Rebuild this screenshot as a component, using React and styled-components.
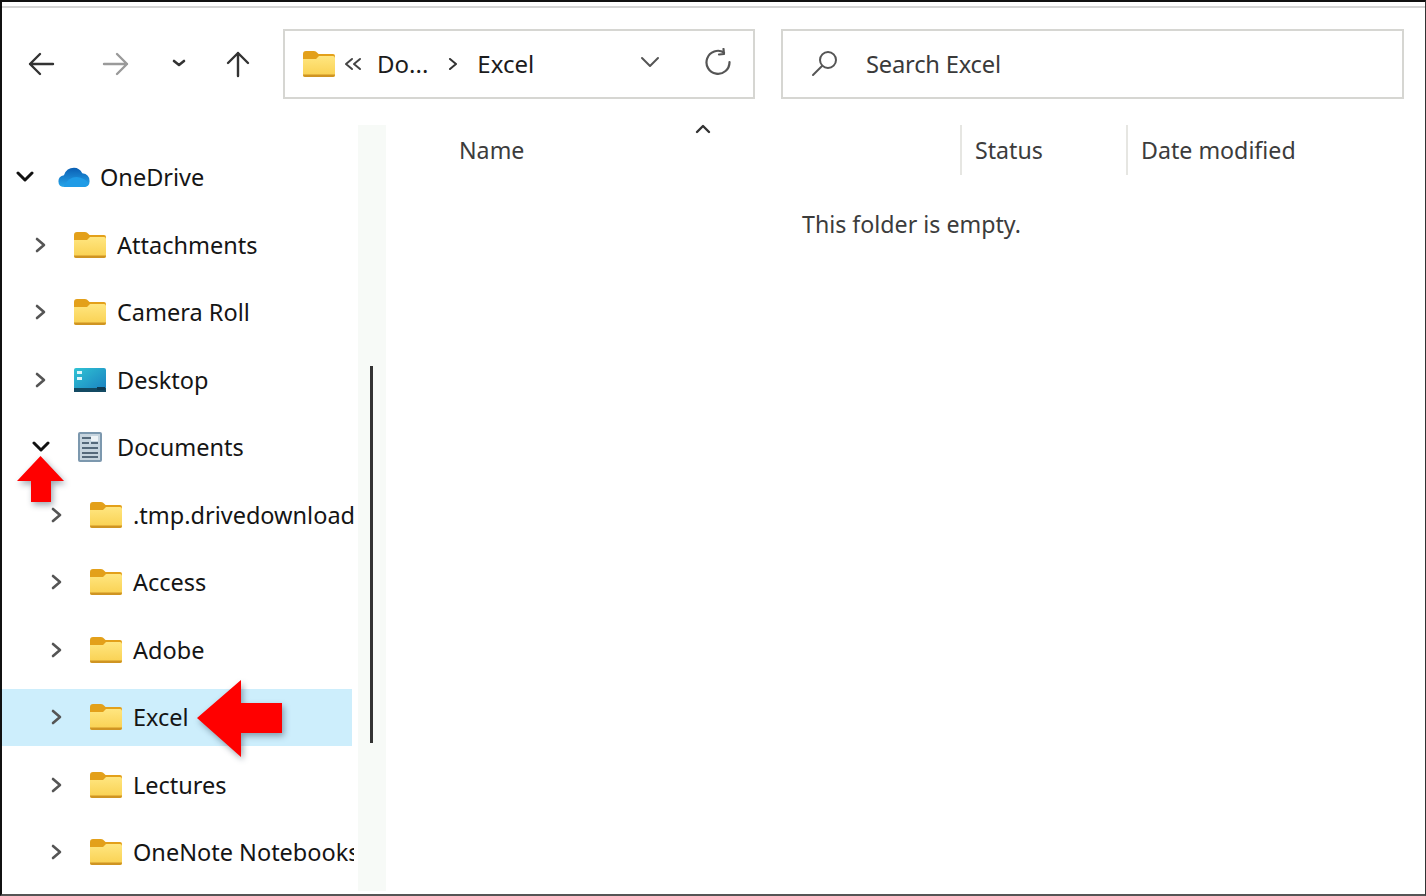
import React from "react";
import styled, { createGlobalStyle } from "styled-components";

const GlobalStyle = createGlobalStyle`
  html, body {
    margin: 0;
    padding: 0;
    background: #fff;
  }
  body {
    font-family: "Noto Sans", "Open Sans", sans-serif;
    color: #1a1a1a;
  }
`;

const Frame = styled.div`
  position: relative;
  box-sizing: border-box;
  width: 1426px;
  height: 896px;
  overflow: hidden;
  background: #fff;
  border-top: 2px solid #111;
  border-left: 2px solid #111;
  border-right: 1px solid #333;
  border-bottom: 2px solid #555;
  display: flex;
  flex-direction: column;
`;

const TopRule = styled.div`
  height: 2px;
  margin-top: 4px;
  background: #d4d4d4;
  flex: none;
`;

// toolbar
const Toolbar = styled.div`
  display: flex;
  align-items: center;
  height: 70px;
  margin-top: 21px;
  flex: none;
`;

const NavButton = styled.div`
  width: ${p => p.$w}px;
  margin-left: ${p => p.$ml}px;
  display: flex;
  justify-content: center;
  align-items: center;
  flex: none;
  color: ${p => p.$color || "#333"};
`;

const FieldBox = styled.div`
  box-sizing: border-box;
  height: 70px;
  border: 2px solid #d6d6d2;
  display: flex;
  align-items: center;
  flex: none;
  width: ${p => p.$w}px;
  margin-left: ${p => p.$ml}px;
  padding-left: ${p => p.$pl}px;
`;

const Crumb = styled.span`
  font-size: 24px;
  margin-left: ${p => p.$ml}px;
  margin-bottom: 2px;
  color: #1c1c1c;
  white-space: nowrap;
`;

const CrumbIcon = styled.div`
  margin-left: ${p => p.$ml}px;
  margin-bottom: ${p => p.$mb || 0}px;
  display: flex;
  align-items: center;
  color: ${p => p.$color || "#444"};
`;

const SearchText = styled.span`
  font-size: 23.7px;
  margin-left: 27px;
  color: #3a3a3a;
  letter-spacing: -0.2px;
`;

// main area
const Body = styled.div`
  display: flex;
  flex: 1;
  min-height: 0;
  margin-top: 26px;
  margin-bottom: 3px;
`;

const Tree = styled.div`
  width: 352px;
  margin-right: 4px;
  flex: none;
  padding-top: 23.5px;
  overflow: hidden;
`;

const TreeRow = styled.div`
  box-sizing: border-box;
  height: 57.5px;
  margin-bottom: 10px;
  width: 350px;
  display: flex;
  align-items: center;
  padding-left: ${p => p.$indent}px;
  background: ${p => (p.$selected ? "#cdeefc" : "transparent")};
`;

const Twisty = styled.div`
  width: 30px;
  margin-right: 16px;
  display: flex;
  justify-content: center;
  flex: none;
  color: ${p => (p.$open ? "#111" : "#555")};
`;

const RowIcon = styled.div`
  width: 36px;
  display: flex;
  justify-content: center;
  flex: none;
`;

const RowLabel = styled.span`
  font-size: 23.5px;
  line-height: 30px;
  margin-left: ${p => p.$ml}px;
  color: #151515;
  white-space: nowrap;
`;

const Gutter = styled.div`
  position: relative;
  width: 28px;
  flex: none;
  background: #f7faf7;
`;

const Thumb = styled.div`
  position: absolute;
  left: 12px;
  top: 241px;
  width: 3px;
  height: 377px;
  background: #333;
`;

const Content = styled.div`
  flex: 1;
  min-width: 0;
`;

const HeaderRow = styled.div`
  display: flex;
  height: 50px;
  align-items: stretch;
`;

const HeaderCell = styled.div`
  position: relative;
  box-sizing: border-box;
  width: ${p => p.$w}px;
  flex: none;
  padding-left: ${p => p.$pl}px;
  padding-top: 9px;
  font-size: 23.2px;
  line-height: 32px;
  color: #3c3c3c;
  border-left: ${p => (p.$sep ? "2px solid #e6e6e2" : "none")};
  white-space: nowrap;
`;

const SortCaret = styled.div`
  position: absolute;
  left: 308px;
  top: -4px;
  color: #333;
  display: flex;
`;

const EmptyText = styled.div`
  margin-top: 33px;
  padding-left: 416px;
  font-size: 23.2px;
  line-height: 32px;
  color: #3c3c3c;
`;

const ArrowOverlay = styled.svg`
  position: absolute;
  left: ${p => p.$x}px;
  top: ${p => p.$y}px;
  filter: drop-shadow(2px 3px 3px rgba(40, 60, 80, 0.45));
`;

const Stroke = ({ size, w = 2, children, h }) => (
  <svg width={size} height={h || size} viewBox={`0 0 ${size} ${h || size}`} fill="none" stroke="currentColor" strokeWidth={w} strokeLinecap="round" strokeLinejoin="round">
    {children}
  </svg>
);

const Folder = () => (
  <svg width="34" height="30" viewBox="0 0 34 30">
    <defs>
      <linearGradient id="folderFace" x1="0" y1="0" x2="0" y2="1">
        <stop offset="0" stopColor="#ffe680" />
        <stop offset="1" stopColor="#f9d050" />
      </linearGradient>
    </defs>
    <path d="M1 5 Q1 2 4 2 H12 Q14 2 15.500 4 L16.500 5 H31 Q33 5 33 7 V12 H1 Z" fill="#e3a01a" />
    <path d="M1 10 H14 L17 7 H31 Q33 7 33 9 V26 Q33 28 31 28 H3 Q1 28 1 26 Z" fill="url(#folderFace)" />
    <path d="M1 26 Q1 28 3 28 H31 Q33 28 33 26 V25.500 H1 Z" fill="#cf9422" />
  </svg>
);

const Cloud = () => (
  <svg width="34" height="22" viewBox="0 0 36 24">
    <defs>
      <linearGradient id="cloud" x1="0" y1="0" x2="0" y2="1">
        <stop offset="0" stopColor="#0a5fb4" />
        <stop offset="1" stopColor="#27a6ea" />
      </linearGradient>
    </defs>
    <path d="M8 23 Q1 23 1 16.500 Q1 11 7 10 Q10 2 18 2 Q24 2 27 8 Q35 9 35 16.500 Q35 23 28 23 Z" fill="url(#cloud)" />
    <path d="M7 22 Q12 12 21 12 Q30 13 34 19 Q32 23 28 23 H8 Z" fill="#1f9be6" />
  </svg>
);

const DesktopIcon = () => (
  <svg width="34" height="26" viewBox="0 0 34 26">
    <defs>
      <linearGradient id="desk" x1="0" y1="0" x2="1" y2="1">
        <stop offset="0" stopColor="#2fc3d4" />
        <stop offset="1" stopColor="#1a7fc0" />
      </linearGradient>
    </defs>
    <rect x="1" y="1" width="32" height="23" rx="2" fill="url(#desk)" />
    <rect x="1" y="21" width="32" height="4" fill="#134a63" />
    <rect x="4" y="4" width="5" height="3" fill="#dff6fa" />
    <rect x="4" y="10" width="5" height="3" fill="#dff6fa" />
    <rect x="24" y="20" width="8" height="3" fill="#0e3a52" />
  </svg>
);

const DocsIcon = () => (
  <svg width="26" height="32" viewBox="0 0 26 32">
    <rect x="1" y="1" width="24" height="30" rx="2" fill="#7c98ae" />
    <rect x="3" y="3" width="20" height="26" fill="#c6d4de" />
    <path d="M5 7 H21 M5 12 H12 M14 12 H21 M5 17 H21 M5 22 H21 M5 26 H21" stroke="#55697a" strokeWidth="1.800" />
    <rect x="14" y="5" width="7" height="5" fill="#eef3f6" />
  </svg>
);

const ChevRight = () => (
  <Stroke size={16} w={2.6}>
    <path d="M4 2 L11 8 L4 14" />
  </Stroke>
);

const ChevDown = () => (
  <Stroke size={18} w={3}>
    <path d="M2 5 L9 12 L16 5" />
  </Stroke>
);

const rows = [
  { label: "OneDrive", indent: 8, open: true, icon: <Cloud />, ml: 8 },
  { label: "Attachments", indent: 24, icon: <Folder />, ml: 9 },
  { label: "Camera Roll", indent: 24, icon: <Folder />, ml: 9 },
  { label: "Desktop", indent: 24, icon: <DesktopIcon />, ml: 9 },
  { label: "Documents", indent: 24, open: true, icon: <DocsIcon />, ml: 9 },
  { label: ".tmp.drivedownload", indent: 40, icon: <Folder />, ml: 9 },
  { label: "Access", indent: 40, icon: <Folder />, ml: 9 },
  { label: "Adobe", indent: 40, icon: <Folder />, ml: 9 },
  { label: "Excel", indent: 40, icon: <Folder />, ml: 9, selected: true },
  { label: "Lectures", indent: 40, icon: <Folder />, ml: 9 },
  { label: "OneNote Notebooks", indent: 40, icon: <Folder />, ml: 9 },
];

const App = () => {
  return (
    <Frame>
      <GlobalStyle />
      <TopRule />
      <Toolbar>
        <NavButton $w={32} $ml={23}>
          <Stroke size={28} w={2.4}>
            <path d="M26 14 H3 M13 4 L3 14 L13 24" />
          </Stroke>
        </NavButton>
        <NavButton $w={32} $ml={43} $color="#9a9a9a">
          <Stroke size={28} w={2.4}>
            <path d="M2 14 H25 M15 4 L25 14 L15 24" />
          </Stroke>
        </NavButton>
        <NavButton $w={20} $ml={37} $color="#333">
          <Stroke size={14} w={2.6}>
            <path d="M2 4 L7 8 L12 4" />
          </Stroke>
        </NavButton>
        <NavButton $w={30} $ml={34}>
          <Stroke size={28} w={2.4}>
            <path d="M14 26 V3 M4 13 L14 3 L24 13" />
          </Stroke>
        </NavButton>
        <FieldBox $w={472} $ml={30} $pl={17}>
          <Folder />
          <CrumbIcon $ml={8} $color="#444">
            <Stroke size={18} w={2}>
              <path d="M8 4 L2 9 L8 14 M16 4 L10 9 L16 14" />
            </Stroke>
          </CrumbIcon>
          <Crumb $ml={15}>Do...</Crumb>
          <CrumbIcon $ml={19} $color="#333">
            <Stroke size={12} w={2}>
              <path d="M3 1 L9 6 L3 11" />
            </Stroke>
          </CrumbIcon>
          <Crumb $ml={18}>Excel</Crumb>
          <CrumbIcon $ml={106} $mb={4} $color="#555">
            <Stroke size={20} w={2}>
              <path d="M2 6 L10 14 L18 6" />
            </Stroke>
          </CrumbIcon>
          <CrumbIcon $ml={44} $mb={4} $color="#555">
            <Stroke size={28} w={2.2}>
              <path d="M20 4.500 A11.500 11.500 0 1 0 25.500 14 M19.500 1 L20 6 L15 6.500" />
            </Stroke>
          </CrumbIcon>
        </FieldBox>
        <FieldBox $w={623} $ml={26} $pl={28}>
          <CrumbIcon $ml={0} $color="#555">
            <Stroke size={28} w={2}>
              <circle cx="17" cy="10" r="8" />
              <path d="M11 16 L2 25" />
            </Stroke>
          </CrumbIcon>
          <SearchText>Search Excel</SearchText>
        </FieldBox>
      </Toolbar>
      <Body>
        <Tree>
          {rows.map(r => (
            <TreeRow key={r.label} $indent={r.indent} $selected={r.selected}>
              <Twisty $open={r.open}>
                {r.open ? <ChevDown /> : <ChevRight />}
              </Twisty>
              <RowIcon>{r.icon}</RowIcon>
              <RowLabel $ml={r.ml}>{r.label}</RowLabel>
            </TreeRow>
          ))}
        </Tree>
        <Gutter>
          <Thumb />
        </Gutter>
        <Content>
          <HeaderRow>
            <HeaderCell $w={574} $pl={73}>
              Name
              <SortCaret>
                <Stroke size={18} w={2.400}>
                  <path d="M3 11 L9 5 L15 11" />
                </Stroke>
              </SortCaret>
            </HeaderCell>
            <HeaderCell $w={166} $pl={13} $sep>Status</HeaderCell>
            <HeaderCell $w={300} $pl={13} $sep>Date modified</HeaderCell>
          </HeaderRow>
          <EmptyText>This folder is empty.</EmptyText>
        </Content>
      </Body>
      <ArrowOverlay $x={14} $y={453} width="52" height="50" viewBox="0 0 52 50">
        <path d="M24.500 1 L48 26 H35 V47 H15 V26 H1 Z" fill="#f00" />
      </ArrowOverlay>
      <ArrowOverlay $x={193} $y={676} width="92" height="84" viewBox="0 0 92 84">
        <path d="M2 40 L46 2 V25 H87 V55 H46 V79 Z" fill="#f00" />
      </ArrowOverlay>
    </Frame>
  );
};

export default App;
